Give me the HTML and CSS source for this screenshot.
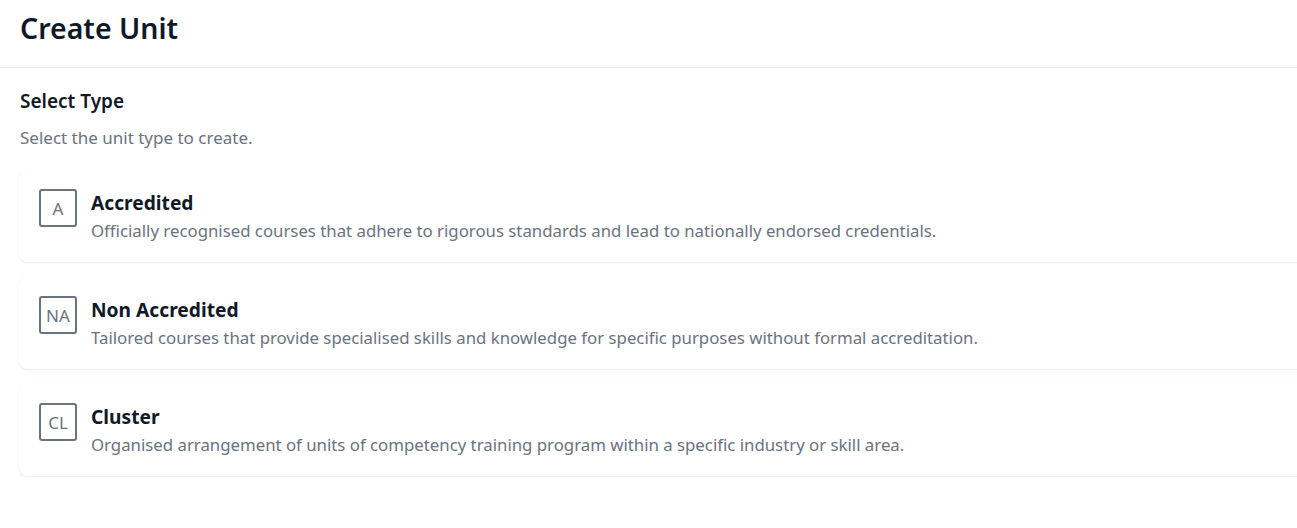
FILE: index.html
```html
<!DOCTYPE html>
<html lang="en">
<head>
<meta charset="utf-8">
<title>Create Unit</title>
<link rel="stylesheet" href="styles.css">
</head>
<body>
<header class="page-header">
  <h1 class="page-title">Create Unit</h1>
</header>
<main class="content">
  <h2 class="section-title">Select Type</h2>
  <p class="section-sub">Select the unit type to create.</p>
  <div class="type-list">
    <div class="type-card">
      <div class="type-badge">A</div>
      <div class="type-text">
        <div class="type-name">Accredited</div>
        <div class="type-desc">Officially recognised courses that adhere to rigorous standards and lead to nationally endorsed credentials.</div>
      </div>
    </div>
    <div class="type-card">
      <div class="type-badge">NA</div>
      <div class="type-text">
        <div class="type-name">Non Accredited</div>
        <div class="type-desc">Tailored courses that provide specialised skills and knowledge for specific purposes without formal accreditation.</div>
      </div>
    </div>
    <div class="type-card">
      <div class="type-badge">CL</div>
      <div class="type-text">
        <div class="type-name">Cluster</div>
        <div class="type-desc">Organised arrangement of units of competency training program within a specific industry or skill area.</div>
      </div>
    </div>
  </div>
</main>
</body>
</html>
```

FILE: styles.css
```css
* { box-sizing: border-box; }
html, body {
  margin: 0;
  padding: 0;
  background: #ffffff;
  overflow-x: hidden;
}
body {
  font-family: "Noto Sans", "Open Sans", sans-serif;
  color: #111827;
}
.page-header {
  height: 68px;
  padding: 10px 20px 0;
  border-bottom: 1px solid #e5e7eb;
}
.page-title {
  margin: 0;
  font-size: 28.5px;
  line-height: 36px;
  font-weight: 600;
  color: #111827;
}
.content {
  padding: 19px 0 20px 19px;
}
.section-title {
  margin: 0 0 0 1px;
  font-size: 19px;
  line-height: 28px;
  font-weight: 600;
  color: #111827;
}
.section-sub {
  margin: 11px 0 0 1px;
  font-size: 17px;
  line-height: 24px;
  color: #6b7280;
}
.type-list {
  margin-top: 20px;
  margin-right: -40px;
  display: flex;
  flex-direction: column;
  gap: 15px;
}
.type-card {
  display: flex;
  align-items: flex-start;
  gap: 14px;
  padding: 19px 20px 19px 20px;
  background: #ffffff;
  border-radius: 8px;
  box-shadow: 0 1px 2px rgba(0, 0, 0, 0.08), 0 0 1px rgba(0, 0, 0, 0.06);
}
.type-badge {
  flex: none;
  width: 38px;
  height: 38px;
  border: 2px solid #6b7280;
  border-radius: 3px;
  display: flex;
  align-items: center;
  justify-content: center;
  font-size: 17px;
  color: #6b7280;
}
.type-text {
  display: flex;
  flex-direction: column;
}
.type-name {
  font-size: 19.2px;
  line-height: 28px;
  font-weight: 700;
  color: #111827;
}
.type-desc {
  margin-top: 2px;
  font-size: 16.8px;
  line-height: 24px;
  color: #6b7280;
}
```
